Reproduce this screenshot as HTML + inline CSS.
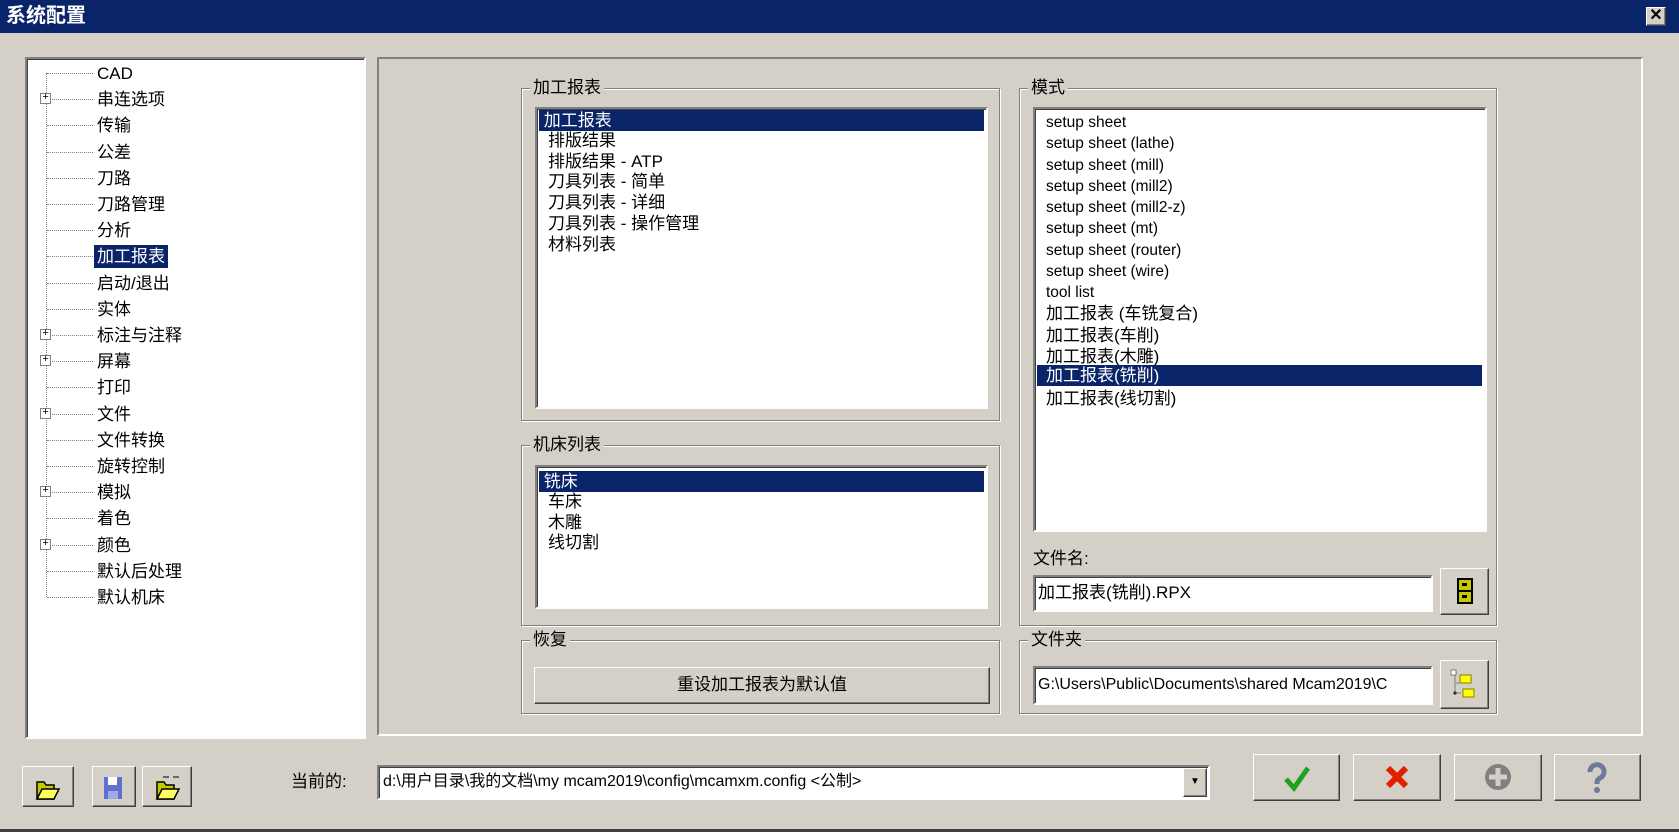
<!DOCTYPE html>
<html><head><meta charset="utf-8"><style>
*{margin:0;padding:0;box-sizing:border-box}
body{width:1679px;height:832px;background:#d4d0c8;position:relative;overflow:hidden;font-family:"Liberation Sans","Noto Sans CJK SC",sans-serif;font-size:17px;color:#000}
.a{position:absolute}
.sunk{border:2px solid;border-color:#808080 #fff #fff #808080;box-shadow:inset 1px 1px 0 #404040}
.wb{background:#fff}
.grp{position:absolute;border:1px solid #808080;box-shadow:1px 1px 0 #fff, inset 1px 1px 0 #fff}
.grp span{position:absolute;top:-12px;left:8px;background:#d4d0c8;padding:0 3px;line-height:22px}
.btn{position:absolute;background:#d4d0c8;border:1px solid;border-color:#fff #404040 #404040 #fff;box-shadow:inset -1px -1px 0 #808080}
.row{position:absolute;line-height:21px;white-space:nowrap}
.sel{background:#0a246a;color:#fff}
.dot{position:absolute;border-top:1px dotted #808080;width:46px}
.plus{position:absolute;width:11px;height:11px;border:1px solid #808080;background:#fff;font-size:11px;line-height:9px;text-align:center;font-family:"Liberation Mono",monospace}
</style></head><body>
<div class="a" style="left:0;top:0;width:1679px;height:33px;background:#0a246a;color:#fff;font-weight:bold;font-size:20px;line-height:33px;padding-left:6px">系统配置</div>
<div class="btn" style="left:1646px;top:7px;width:20px;height:19px;font-size:16px;line-height:15px;text-align:center;font-weight:bold">✕</div>
<div class="a" style="left:0;top:829px;width:1679px;height:3px;background:#404040"></div>

<div class="a sunk wb" style="left:25px;top:57px;width:341px;height:682px"></div>
<div class="a" style="left:46px;top:73px;height:524px;border-left:1px dotted #808080"></div>
<div id="tree"></div>

<div class="a sunk" style="left:377px;top:57px;width:1266px;height:679px;box-shadow:none"></div>

<div class="grp" style="left:521px;top:88px;width:479px;height:333px"><span>加工报表</span></div>
<div class="a sunk wb" style="left:535px;top:107px;width:453px;height:302px"></div>
<div class="row sel" style="left:539px;top:110px;width:445px">&nbsp;加工报表</div>
<div class="row" style="left:548px;top:131px;line-height:20.7px">排版结果<br>排版结果 - ATP<br>刀具列表 - 简单<br>刀具列表 - 详细<br>刀具列表 - 操作管理<br>材料列表</div>

<div class="grp" style="left:521px;top:445px;width:479px;height:181px"><span>机床列表</span></div>
<div class="a sunk wb" style="left:535px;top:465px;width:453px;height:144px"></div>
<div class="row sel" style="left:539px;top:471px;width:445px">&nbsp;铣床</div>
<div class="row" style="left:548px;top:492px;line-height:20.7px">车床<br>木雕<br>线切割</div>

<div class="grp" style="left:521px;top:640px;width:479px;height:74px"><span>恢复</span></div>
<div class="btn" style="left:534px;top:667px;width:456px;height:37px;text-align:center;line-height:34px">重设加工报表为默认值</div>

<div class="grp" style="left:1019px;top:88px;width:478px;height:538px"><span>模式</span></div>
<div class="a sunk wb" style="left:1033px;top:107px;width:454px;height:425px"></div>
<div id="mode"></div>
<div class="row" style="left:1033px;top:548px">文件名:</div>
<div class="a sunk wb" style="left:1033px;top:575px;width:400px;height:37px;line-height:32px;padding-left:3px;white-space:nowrap">加工报表(铣削).RPX</div>
<div class="btn" style="left:1440px;top:568px;width:49px;height:47px"><svg width="47" height="45"><rect x="17" y="10" width="14" height="24" fill="#c8c800" stroke="#000" stroke-width="2"/><line x1="17" y1="22" x2="31" y2="22" stroke="#000" stroke-width="2"/><rect x="21" y="14" width="5" height="3" fill="#000"/><rect x="21" y="26" width="5" height="3" fill="#000"/></svg></div>

<div class="grp" style="left:1019px;top:640px;width:478px;height:74px"><span>文件夹</span></div>
<div class="a sunk wb" style="left:1033px;top:666px;width:400px;height:39px;line-height:34px;padding-left:3px;white-space:nowrap;overflow:hidden;font-size:16px">G:\Users\Public\Documents\shared Mcam2019\C</div>
<div class="btn" style="left:1440px;top:660px;width:49px;height:49px"><svg width="47" height="47"><path d="M12 12h4M14 14v18h6M14 22h4" stroke="#808080" fill="none"/><rect x="10" y="9" width="5" height="5" fill="#fff" stroke="#808080"/><rect x="19" y="14" width="11" height="8" fill="#ff0" stroke="#808000"/><rect x="22" y="28" width="11" height="8" fill="#ff0" stroke="#808000"/><path d="M12 32h4M14 30v4" stroke="#000"/></svg></div>

<div class="btn" style="left:22px;top:766px;width:52px;height:41px"><svg width="50" height="39"><path d="M14 15h7l2 3h8v14H14z" fill="#c8c800" stroke="#000" stroke-width="1.5"/><path d="M14 32l5-10h17l-5 10z" fill="#ffff60" stroke="#000" stroke-width="1.5"/></svg></div>
<div class="btn" style="left:92px;top:766px;width:44px;height:41px"><svg width="42" height="39"><path d="M11 10h18v22H11z" fill="#6070d0"/><rect x="15" y="10" width="9" height="8" fill="#fff"/><rect x="15" y="24" width="10" height="8" fill="#a0a8e8"/></svg></div>
<div class="btn" style="left:142px;top:766px;width:50px;height:41px"><svg width="48" height="39"><path d="M14 15h7l2 3h8v14H14z" fill="#c8c800" stroke="#000" stroke-width="1.5"/><path d="M14 32l5-10h17l-5 10z" fill="#ffff60" stroke="#000" stroke-width="1.5"/><path d="M20 10h6M30 10h6" stroke="#000"/></svg></div>
<div class="row" style="left:291px;top:771px">当前的:</div>
<div class="a sunk wb" style="left:377px;top:765px;width:833px;height:35px;line-height:30px;padding-left:4px;white-space:nowrap;font-size:16px">d:\用户目录\我的文档\my mcam2019\config\mcamxm.config &lt;公制&gt;</div>
<div class="btn" style="left:1183px;top:768px;width:24px;height:29px;font-size:10px;text-align:center;line-height:26px">▼</div>

<div class="btn" style="left:1253px;top:754px;width:87px;height:47px"><svg width="85" height="45"><path d="M32 24l8 9 14-20" stroke="#20a020" stroke-width="5" fill="none"/></svg></div>
<div class="btn" style="left:1353px;top:754px;width:88px;height:47px"><svg width="86" height="45"><path d="M34 13l18 18M52 13L34 31" stroke="#e02000" stroke-width="6" fill="none"/></svg></div>
<div class="btn" style="left:1454px;top:754px;width:88px;height:47px"><svg width="86" height="45"><circle cx="43" cy="22" r="13" fill="#808080"/><path d="M43 13v18M34 22h18" stroke="#d4d0c8" stroke-width="5"/></svg></div>
<div class="btn" style="left:1554px;top:754px;width:87px;height:47px"><svg width="85" height="45"><path d="M35 17a7 7 0 1 1 10 6c-3 2-3 3-3 6" stroke="#7078a0" stroke-width="5" fill="none"/><circle cx="42" cy="35" r="3" fill="#7078a0"/></svg></div>

<script>
var items=["CAD","串连选项","传输","公差","刀路","刀路管理","分析","加工报表","启动/退出","实体","标注与注释","屏幕","打印","文件","文件转换","旋转控制","模拟","着色","颜色","默认后处理","默认机床"];
var plus={1:1,10:1,11:1,13:1,16:1,18:1};
var h="";
items.forEach(function(t,i){var y=73+i*26.2;
h+='<div class="dot" style="left:47px;top:'+Math.round(y)+'px"></div>';
if(plus[i])h+='<div class="plus" style="left:40px;top:'+Math.round(y-6)+'px">+</div>';
h+='<div class="row'+(i==7?' sel':'')+'" style="left:'+(i==7?94:97)+'px;top:'+Math.round(y-11)+'px;line-height:23px;'+(i==7?'padding:0 3px;':'')+'">'+t+'</div>';});
document.getElementById("tree").innerHTML=h;
var m=["setup sheet","setup sheet (lathe)","setup sheet (mill)","setup sheet (mill2)","setup sheet (mill2-z)","setup sheet (mt)","setup sheet (router)","setup sheet (wire)","tool list","加工报表 (车铣复合)","加工报表(车削)","加工报表(木雕)","加工报表(铣削)","加工报表(线切割)"];
h="";
m.forEach(function(t,i){var y=Math.round(112+i*21.25);var s=i==12;var cjk=i>8;
h+='<div class="row'+(s?' sel':'')+'" style="left:'+(s?1037:1046)+'px;top:'+(s?y-2:y)+'px;height:21px;line-height:21px;overflow:visible;font-size:'+(cjk?17:15.5)+'px;'+(s?'width:445px;padding-left:9px;':'')+'">'+t+'</div>';});
document.getElementById("mode").innerHTML=h;
</script>
</body></html>
